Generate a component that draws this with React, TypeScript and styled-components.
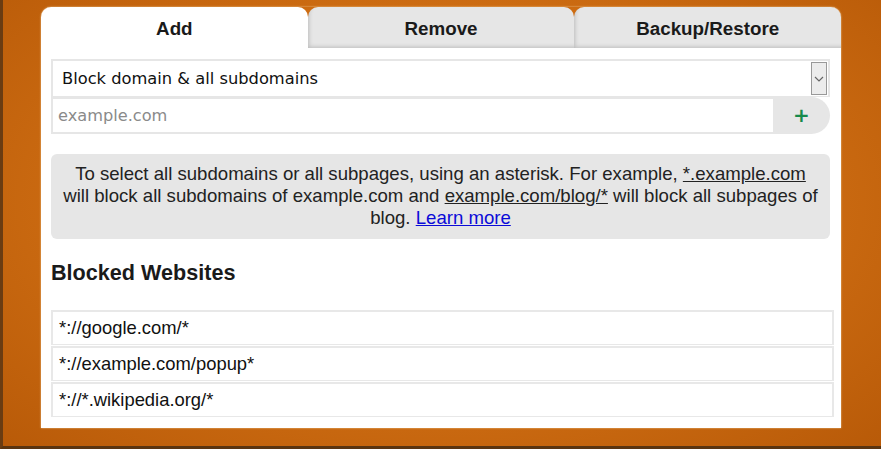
import styled, { createGlobalStyle } from "styled-components"

const GlobalStyle = createGlobalStyle`
  html, body {
    margin: 0;
    padding: 0;
    height: 100%;
  }
  body {
    background: radial-gradient(ellipse at 50% 45%, #d5771a 0%, #cd6c12 55%, #b85a08 100%);
    font-family: "Liberation Sans", Arial, sans-serif;
    overflow: hidden;
  }
  #root {
    height: 100%;
  }
`

const tabs = ["Add", "Remove", "Backup/Restore"]
const blocked = ["*://google.com/*", "*://example.com/popup*", "*://*.wikipedia.org/*"]

function App() {
  return <Page>
    <GlobalStyle />
    <Panel>
      <TabBar>
        {tabs.map((t, i) => (
          <Tab key={t} $active={i === 0}>{t}</Tab>
        ))}
      </TabBar>
      <Content>
        <SelectBox>
          <SelectText>Block domain &amp; all subdomains</SelectText>
          <ArrowBox>
            <svg width="10" height="6" viewBox="0 0 10 6">
              <path d="M1 1l4 4 4-4" fill="none" stroke="#666" strokeWidth="1.2" />
            </svg>
          </ArrowBox>
        </SelectBox>
        <InputRow>
          <DomainInput placeholder="example.com" />
          <AddButton>+</AddButton>
        </InputRow>
        <Info>
          To select all subdomains or all subpages, using an asterisk. For example, <u>*.example.com</u><br />
          will block all subdomains of example.com and <u>example.com/blog/*</u> will block all subpages of
          blog. <a href="#">Learn more</a>
        </Info>
        <Heading>Blocked Websites</Heading>
        <List>
          {blocked.map(b => <Item key={b}>{b}</Item>)}
        </List>
      </Content>
    </Panel>
  </Page>
}

export default App

const Page = styled.div`
  height: 100%;
  box-sizing: border-box;
  padding: 7px 40px 0 38px;
  border-left: 3px solid #6a3c12;
  border-bottom: 3px solid #5a3410;
`

const Panel = styled.div`
  width: 800px;
  background: #fff;
  border-radius: 10px 10px 0 0;
  box-shadow: 0 0 2px rgba(255, 240, 200, 0.8);
`

const TabBar = styled.div`
  display: flex;
  height: 41px;
  background: #cd6c12;
  border-radius: 10px 10px 0 0;
`

const Tab = styled.div<{ $active: boolean }>`
  flex: 1;
  display: flex;
  align-items: center;
  justify-content: center;
  font-weight: bold;
  font-size: 18.8px;
  color: #1a1a1a;
  border-radius: 10px 10px 0 0;
  background: ${p => p.$active ? "#fff" : "#e6e6e6"};
  box-shadow: ${p => p.$active ? "none" : "inset 3px -3px 4px -2px rgba(0,0,0,0.18)"};
  padding-top: 2px;
`

const Content = styled.div`
  padding: 11px 7px 11px 10px;
`

const SelectBox = styled.div`
  display: flex;
  align-items: center;
  height: 38px;
  box-sizing: border-box;
  margin-right: 4px;
  border: 2px solid #e6e6e6;
  border-bottom-width: 1px;
  padding: 0 1px 0 9px;
`

const SelectText = styled.div`
  flex: 1;
  font-family: "DejaVu Sans", Tahoma, sans-serif;
  font-size: 16.3px;
  color: #111;
`

const ArrowBox = styled.div`
  width: 16px;
  height: 33px;
  box-sizing: border-box;
  border: 1px solid #999;
  background: #ececec;
  display: flex;
  align-items: center;
  justify-content: center;
`

const InputRow = styled.div`
  display: flex;
  height: 37px;
  margin-right: 4px;
`

const DomainInput = styled.input`
  flex: 1;
  min-width: 0;
  box-sizing: border-box;
  border: 2px solid #e6e6e6;
  border-right: none;
  outline: none;
  padding: 0 5px;
  font-family: "DejaVu Sans", Tahoma, sans-serif;
  font-size: 16.2px;
  color: #111;
  &::placeholder {
    color: #8a8a8a;
  }
`

const AddButton = styled.button`
  width: 57px;
  border: none;
  background: #e6e6e6;
  border-radius: 0 19px 19px 0;
  color: #178a4c;
  font-family: "DejaVu Sans", sans-serif;
  font-weight: bold;
  font-size: 20px;
  padding: 0 0 2px 0;
`

const Info = styled.div`
  margin: 20px 4px 0 0;
  background: #e6e6e6;
  border-radius: 6px;
  padding: 9px 8px 10px;
  text-align: center;
  font-size: 18.6px;
  line-height: 22px;
  color: #222;
  a {
    color: #0b0bd8;
  }
`

const Heading = styled.h2`
  margin: 22px 0 25px;
  font-size: 21.6px;
  line-height: 24px;
  font-weight: bold;
  color: #1a1a1a;
`

const List = styled.div`
  display: flex;
  flex-direction: column;
  gap: 1px;
`

const Item = styled.div`
  height: 35px;
  box-sizing: border-box;
  border: 2px solid #e8e8e8;
  border-bottom-width: 1px;
  padding: 0 6px;
  display: flex;
  align-items: center;
  font-size: 18.4px;
  color: #111;
`
